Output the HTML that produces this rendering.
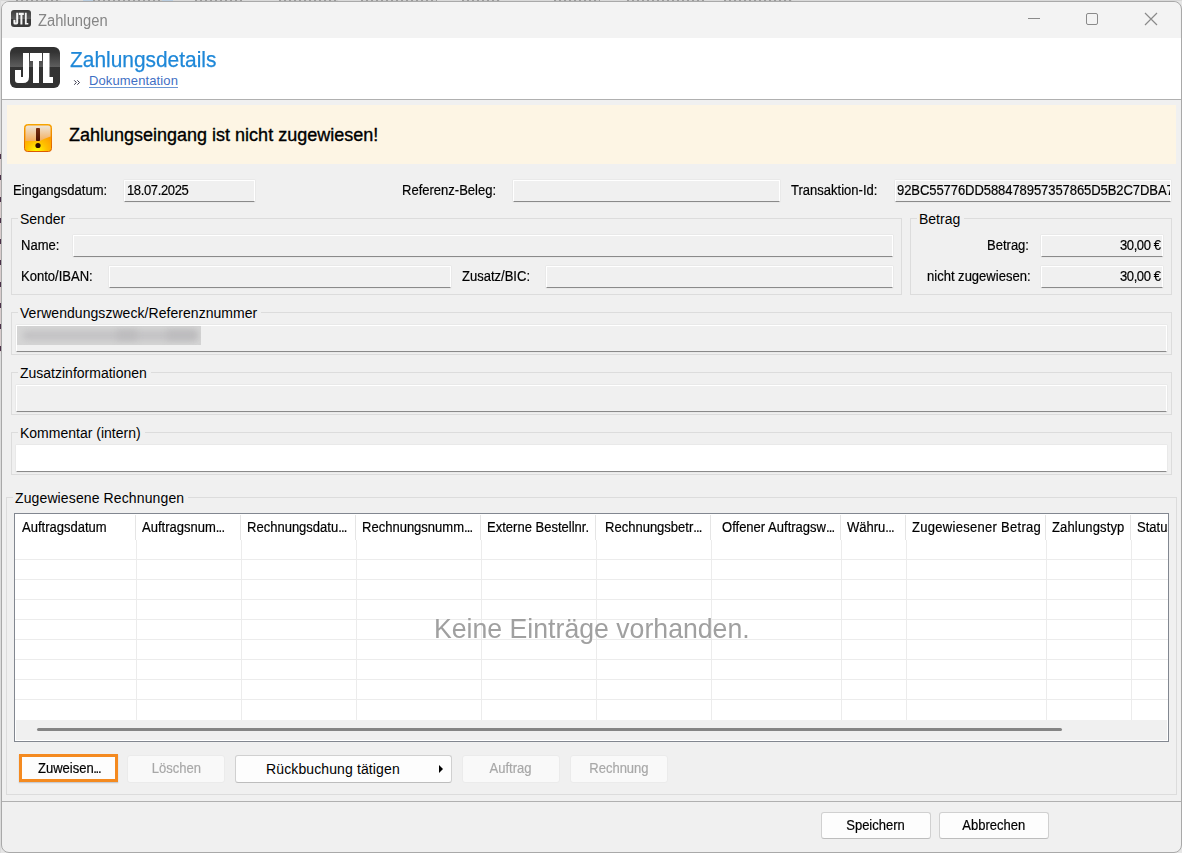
<!DOCTYPE html>
<html><head><meta charset="utf-8">
<style>
html,body{margin:0;padding:0;}
body{width:1182px;height:853px;overflow:hidden;position:relative;background:#e6e6e6;font-family:"Liberation Sans",sans-serif;color:#000;}
.a{position:absolute;}
.t{position:absolute;white-space:nowrap;line-height:13px;font-size:13px;}
.win{position:absolute;left:1px;top:1px;width:1179px;height:850px;border:1px solid #a9a9a9;border-radius:8px;background:#f0f0f0;overflow:hidden;}
.gb{position:absolute;box-sizing:border-box;border:1px solid #dcdcdc;}
.gbt{position:absolute;white-space:nowrap;line-height:14px;font-size:14px;background:#f0f0f0;padding:0 4px 0 2px;}
.tb{position:absolute;box-sizing:border-box;border:1px solid #fff;border-bottom:1px solid #8a8a8a;border-radius:1px;background:#f0f0f0;box-shadow:0 0 0 1px #e9e9e9;overflow:hidden;}
.btn{position:absolute;box-sizing:border-box;border:1px solid #d0d0d0;border-bottom-color:#bdbdbd;border-radius:3px;background:#fdfdfd;font-size:13px;line-height:13px;text-align:center;white-space:nowrap;}
.dis{border-color:#ebebeb;background:#f9f9f9;color:#a8a8a8;}
.gl{position:absolute;background:#ececec;}
.s{font-size:14px;line-height:14px;transform:scaleX(0.93);transform-origin:0 0;-webkit-text-stroke:0.2px currentColor;}
.bt{display:inline-block;font-size:14px;line-height:14px;transform:scaleX(0.93);-webkit-text-stroke:0.2px currentColor;}
</style></head>
<body>
<div class="a" style="left:0;top:0;width:1182px;height:1px;background:#d9d9d9;"></div>
<div class="a" style="left:83px;top:0;width:90px;height:1px;background:#b9cde0;"></div>
<div class="a" style="left:16px;top:0;width:45px;height:1px;background:repeating-linear-gradient(90deg,#9a9a9a 0 2px,#cdcdcd 2px 5px);"></div>
<div class="a" style="left:93px;top:0;width:69px;height:1px;background:repeating-linear-gradient(90deg,#9a9a9a 0 2px,#cdcdcd 2px 5px);"></div>
<div class="a" style="left:195px;top:0;width:47px;height:1px;background:repeating-linear-gradient(90deg,#9a9a9a 0 2px,#cdcdcd 2px 5px);"></div>
<div class="a" style="left:279px;top:0;width:59px;height:1px;background:repeating-linear-gradient(90deg,#9a9a9a 0 2px,#cdcdcd 2px 5px);"></div>
<div class="a" style="left:361px;top:0;width:76px;height:1px;background:repeating-linear-gradient(90deg,#9a9a9a 0 2px,#cdcdcd 2px 5px);"></div>
<div class="a" style="left:462px;top:0;width:38px;height:1px;background:repeating-linear-gradient(90deg,#9a9a9a 0 2px,#cdcdcd 2px 5px);"></div>
<div class="a" style="left:554px;top:0;width:46px;height:1px;background:repeating-linear-gradient(90deg,#9a9a9a 0 2px,#cdcdcd 2px 5px);"></div>
<div class="a" style="left:627px;top:0;width:77px;height:1px;background:repeating-linear-gradient(90deg,#9a9a9a 0 2px,#cdcdcd 2px 5px);"></div>
<div class="a" style="left:724px;top:0;width:68px;height:1px;background:repeating-linear-gradient(90deg,#9a9a9a 0 2px,#cdcdcd 2px 5px);"></div>
<div class="a" style="left:0;top:0;width:1px;height:853px;background:#dcdcdc;"></div>
<div class="a" style="left:0;top:152px;width:1px;height:200px;background:repeating-linear-gradient(180deg,#d8cccc 0 2px,#4a3048 2px 7px,#d8cccc 7px 21.3px);"></div>
<div class="win"></div>
<!-- title bar -->
<div class="a" style="left:2px;top:2px;width:1178px;height:36px;background:#f3f3f3;border-radius:7px 7px 0 0;"></div>
<svg width="0" height="0" style="position:absolute"><defs>
<linearGradient id="lg" x1="0" y1="0" x2="0" y2="1">
<stop offset="0" stop-color="#303030"/><stop offset="0.12" stop-color="#333"/><stop offset="0.49" stop-color="#5e5e5e"/><stop offset="0.5" stop-color="#323232"/><stop offset="1" stop-color="#333"/>
</linearGradient>
<g id="jtl">
<rect x="0" y="0" width="50" height="41" rx="6" fill="url(#lg)"/>
<path fill="#fff" d="M13 6H19V30Q19 36 13 36H8Q5 36 5 33V23H11V30H13Z"/>
<path fill="#fff" d="M20 6H32V14H29V36H23V14H20Z"/>
<path fill="#fff" d="M33 6H39.5V30H43V36H33Z"/>
</g>
<linearGradient id="wt" x1="0" y1="0" x2="0" y2="1"><stop offset="0" stop-color="#ede6da"/><stop offset="1" stop-color="#f4ae5c"/></linearGradient>
<radialGradient id="wb" cx="0.45" cy="1" r="0.7"><stop offset="0" stop-color="#ffff00"/><stop offset="0.55" stop-color="#ffbf00"/><stop offset="1" stop-color="#ff9c00"/></radialGradient>
<linearGradient id="ws" x1="0" y1="0" x2="0" y2="1"><stop offset="0" stop-color="#f5a500"/><stop offset="1" stop-color="#dc5a00"/></linearGradient>
<linearGradient id="we" x1="0" y1="0" x2="0" y2="1"><stop offset="0" stop-color="#7a3010"/><stop offset="1" stop-color="#4a1200"/></linearGradient>
</defs></svg><svg class="a" style="left:11px;top:10px" width="20" height="17" viewBox="0 0 20 17">
<defs><linearGradient id="sg" x1="0" y1="0" x2="0" y2="1"><stop offset="0" stop-color="#3a3a3a"/><stop offset="0.5" stop-color="#5c5c5c"/><stop offset="0.52" stop-color="#383838"/><stop offset="1" stop-color="#3a3a3a"/></linearGradient></defs>
<rect x="0" y="0" width="20" height="17" rx="3" fill="url(#sg)"/>
<path fill="#f4f4f4" d="M5.2 2.8H7.2V12.8Q7.2 14.6 5.4 14.6H4Q2.4 14.6 2.4 13V9.8H4.5V12.6H5.2Z"/>
<path fill="#f4f4f4" d="M7.8 2.8H12.8V5H11.4V14.6H9.4V5H7.8Z"/>
<path fill="#f4f4f4" d="M13.9 2.8H15.7V12.9H17.3V14.6H13.9Z"/>
</svg>
<div class="t" style="left:38px;top:13px;font-size:16px;line-height:16px;color:#858585;transform:scaleX(0.92);transform-origin:0 0;">Zahlungen</div>
<!-- window controls -->
<div class="a" style="left:1028px;top:18px;width:12px;height:1px;background:#8a8a8a;"></div>
<div class="a" style="left:1086px;top:13px;width:10px;height:10px;border:1px solid #8a8a8a;border-radius:2px;"></div>
<svg class="a" style="left:1144px;top:12px" width="14" height="14" viewBox="0 0 14 14"><path d="M1 1L13 13M13 1L1 13" stroke="#8a8a8a" stroke-width="1.2"/></svg>
<!-- header -->
<div class="a" style="left:2px;top:38px;width:1179px;height:61px;background:#fff;"></div>
<div class="a" style="left:2px;top:99px;width:1179px;height:1px;background:#b0b0b0;"></div>
<svg class="a" style="left:10px;top:47px" width="50" height="41" viewBox="0 0 50 41"><use href="#jtl"/></svg>
<div class="t" style="left:70px;top:49px;font-size:22px;line-height:22px;color:#1f88d8;transform:scaleX(0.95);transform-origin:0 0;-webkit-text-stroke:0.25px #1f88d8;">Zahlungsdetails</div>
<svg class="a" style="left:73px;top:79px" width="8" height="7" viewBox="0 0 8 7"><path d="M1.2 1.3L3.4 3.5L1.2 5.7M4.3 1.3L6.5 3.5L4.3 5.7" fill="none" stroke="#2a2a40" stroke-width="0.95"/></svg>
<div class="t" style="left:89px;top:74px;color:#3f6fc4;letter-spacing:0.12px;">Dokumentation</div><div class="a" style="left:89px;top:87px;width:89px;height:1px;background:#6b97d4;"></div>
<!-- warning -->
<div class="a" style="left:7px;top:105px;width:1169px;height:59px;background:#fdf5e4;"></div>
<svg class="a" style="left:24px;top:124px" width="28" height="28" viewBox="0 0 28 28">
<rect x="0.5" y="0.5" width="27" height="27" rx="3" fill="url(#wb)" stroke="url(#ws)"/>
<path d="M1.5 4Q1.5 1.5 4 1.5H24Q26.5 1.5 26.5 4V12.5L20 15L16 17H1.5Z" fill="url(#wt)"/>
<rect x="12" y="4" width="4" height="13" rx="0.8" fill="url(#we)"/>
<circle cx="14" cy="21.5" r="2.6" fill="#2a0c00"/>
</svg>
<div class="t" style="left:69px;top:126px;font-size:18px;line-height:18px;-webkit-text-stroke:0.35px #000;">Zahlungseingang ist nicht zugewiesen!</div>

<!-- row 1 -->
<div class="t s" style="left:13px;top:183px;">Eingangsdatum:</div>
<div class="tb" style="left:124px;top:180px;width:131px;height:22px;"></div>
<div class="t s" style="left:127px;top:183px;letter-spacing:-0.4px;">18.07.2025</div>
<div class="t s" style="left:402px;top:183px;">Referenz-Beleg:</div>
<div class="tb" style="left:513px;top:180px;width:267px;height:22px;"></div>
<div class="t s" style="left:791px;top:183px;">Transaktion-Id:</div>
<div class="tb" style="left:895px;top:180px;width:276px;height:22px;"><div class="t s" style="left:1px;top:2px;letter-spacing:-0.08px;">92BC55776DD588478957357865D5B2C7DBA7</div></div>
<!-- Sender -->
<div class="gb" style="left:11px;top:218px;width:891px;height:77px;"></div>
<div class="gbt" style="left:18px;top:212px;">Sender</div>
<div class="t s" style="left:21px;top:238px;">Name:</div>
<div class="tb" style="left:73px;top:235px;width:820px;height:22px;"></div>
<div class="t s" style="left:21px;top:269px;">Konto/IBAN:</div>
<div class="tb" style="left:109px;top:266px;width:342px;height:22px;"></div>
<div class="t s" style="left:462px;top:269px;">Zusatz/BIC:</div>
<div class="tb" style="left:546px;top:266px;width:347px;height:22px;"></div>
<!-- Betrag -->
<div class="gb" style="left:910px;top:218px;width:262px;height:77px;"></div>
<div class="gbt" style="left:917px;top:212px;">Betrag</div>
<div class="t s" style="left:987px;top:238px;">Betrag:</div>
<div class="tb" style="left:1041px;top:235px;width:122px;height:22px;"></div>
<div class="t s" style="left:1120px;top:238px;letter-spacing:-0.45px;">30,00 &euro;</div>
<div class="t s" style="left:927px;top:269px;">nicht zugewiesen:</div>
<div class="tb" style="left:1041px;top:266px;width:122px;height:22px;"></div>
<div class="t s" style="left:1120px;top:269px;letter-spacing:-0.45px;">30,00 &euro;</div>
<!-- Verwendungszweck -->
<div class="gb" style="left:11px;top:312px;width:1161px;height:43px;"></div>
<div class="gbt" style="left:18px;top:306px;letter-spacing:0.05px;">Verwendungszweck/Referenznummer</div>
<div class="tb" style="left:16px;top:325px;width:1151px;height:27px;"></div>
<div class="a" style="left:17px;top:326px;width:184px;height:19px;background:#d5d5d5;overflow:hidden;"><div class="a" style="left:6px;top:5px;width:174px;height:9px;background:#c2c1c3;filter:blur(3px);border-radius:4px;"></div><div class="a" style="left:100px;top:4px;width:20px;height:10px;background:#bdbcbe;filter:blur(3px);"></div><div class="a" style="left:150px;top:4px;width:30px;height:10px;background:#bdbcbe;filter:blur(3px);"></div></div>
<!-- Zusatzinformationen -->
<div class="gb" style="left:11px;top:372px;width:1161px;height:43px;"></div>
<div class="gbt" style="left:18px;top:366px;">Zusatzinformationen</div>
<div class="tb" style="left:16px;top:385px;width:1151px;height:27px;"></div>
<!-- Kommentar -->
<div class="gb" style="left:11px;top:432px;width:1161px;height:43px;"></div>
<div class="gbt" style="left:18px;top:426px;">Kommentar (intern)</div>
<div class="tb" style="left:16px;top:445px;width:1151px;height:27px;background:#fff;"></div>
<!-- Zugewiesene Rechnungen -->
<div class="gb" style="left:6px;top:497px;width:1171px;height:298px;"></div>
<div class="gbt" style="left:13px;top:491px;letter-spacing:0.12px;">Zugewiesene Rechnungen</div>
<div class="a" style="left:14px;top:513px;width:1155px;height:229px;box-sizing:border-box;border:1px solid #828790;background:#fff;overflow:hidden;">
<div class="a" style="left:1px;top:206px;width:1151px;height:20px;background:#f0f0f0;"></div>
<div class="a" style="left:22px;top:214px;width:1025px;height:3px;background:#858585;border-radius:2px;"></div>
<div class="gl" style="left:0;top:45px;width:1153px;height:1px;"></div>
<div class="gl" style="left:0;top:65px;width:1153px;height:1px;"></div>
<div class="gl" style="left:0;top:85px;width:1153px;height:1px;"></div>
<div class="gl" style="left:0;top:105px;width:1153px;height:1px;"></div>
<div class="gl" style="left:0;top:125px;width:1153px;height:1px;"></div>
<div class="gl" style="left:0;top:145px;width:1153px;height:1px;"></div>
<div class="gl" style="left:0;top:165px;width:1153px;height:1px;"></div>
<div class="gl" style="left:0;top:185px;width:1153px;height:1px;"></div>
<div class="gl" style="left:121px;top:26px;width:1px;height:180px;"></div>
<div class="a" style="left:120px;top:1px;width:1px;height:25px;background:#e5e5e5;"></div>
<div class="gl" style="left:226px;top:26px;width:1px;height:180px;"></div>
<div class="a" style="left:225px;top:1px;width:1px;height:25px;background:#e5e5e5;"></div>
<div class="gl" style="left:341px;top:26px;width:1px;height:180px;"></div>
<div class="a" style="left:340px;top:1px;width:1px;height:25px;background:#e5e5e5;"></div>
<div class="gl" style="left:466px;top:26px;width:1px;height:180px;"></div>
<div class="a" style="left:465px;top:1px;width:1px;height:25px;background:#e5e5e5;"></div>
<div class="gl" style="left:581px;top:26px;width:1px;height:180px;"></div>
<div class="a" style="left:580px;top:1px;width:1px;height:25px;background:#e5e5e5;"></div>
<div class="gl" style="left:696px;top:26px;width:1px;height:180px;"></div>
<div class="a" style="left:695px;top:1px;width:1px;height:25px;background:#e5e5e5;"></div>
<div class="gl" style="left:826px;top:26px;width:1px;height:180px;"></div>
<div class="a" style="left:825px;top:1px;width:1px;height:25px;background:#e5e5e5;"></div>
<div class="gl" style="left:891px;top:26px;width:1px;height:180px;"></div>
<div class="a" style="left:890px;top:1px;width:1px;height:25px;background:#e5e5e5;"></div>
<div class="gl" style="left:1031px;top:26px;width:1px;height:180px;"></div>
<div class="a" style="left:1030px;top:1px;width:1px;height:25px;background:#e5e5e5;"></div>
<div class="gl" style="left:1116px;top:26px;width:1px;height:180px;"></div>
<div class="a" style="left:1115px;top:1px;width:1px;height:25px;background:#e5e5e5;"></div>
<div class="t s" style="left:7px;top:6px;">Auftragsdatum</div>
<div class="t s" style="left:127px;top:6px;">Auftragsnum<span style="letter-spacing:-0.9px">...</span></div>
<div class="t s" style="left:232px;top:6px;">Rechnungsdatu<span style="letter-spacing:-0.9px">...</span></div>
<div class="t s" style="left:347px;top:6px;">Rechnungsnumm<span style="letter-spacing:-0.9px">...</span></div>
<div class="t s" style="left:472px;top:6px;">Externe Bestellnr.</div>
<div class="t s" style="left:590px;top:6px;">Rechnungsbetr<span style="letter-spacing:-0.9px">...</span></div>
<div class="t s" style="left:707px;top:6px;">Offener Auftragsw<span style="letter-spacing:-0.9px">...</span></div>
<div class="t s" style="left:832px;top:6px;">Währu<span style="letter-spacing:-0.9px">...</span></div>
<div class="t s" style="left:897px;top:6px;"><span style="letter-spacing:0.3px">Zugewiesener Betrag</span></div>
<div class="t s" style="left:1037px;top:6px;letter-spacing:0.15px;">Zahlungstyp</div>
<div class="t s" style="left:1122px;top:6px;">Status</div>
<div class="t" style="left:419px;top:100.5px;font-size:28px;line-height:28px;color:#a0a0a0;transform:scaleX(0.952);transform-origin:0 0;">Keine Einträge vorhanden.</div>
</div>

<!-- buttons -->
<div class="btn" style="left:19px;top:754px;width:99px;height:28px;border:3px solid #f48a20;border-radius:0;background:#fdfdfd;padding-top:5px;box-shadow:0 1px 1px rgba(80,90,110,0.25);"><span class="t s" style="left:16px;top:4px;">Zuweisen<span style="letter-spacing:-1.4px;margin-left:-0.5px">...</span></span></div>
<div class="btn dis" style="left:127px;top:755px;width:98px;height:28px;padding-top:5px;"><span class="bt">Löschen</span></div>
<div class="btn" style="left:235px;top:755px;width:217px;height:28px;font-size:14px;line-height:14px;text-align:left;"><span class="t" style="left:30px;top:6px;font-size:14px;line-height:14px;letter-spacing:0.12px;">Rückbuchung tätigen</span></div>
<svg class="a" style="left:439px;top:765px" width="4" height="8"><path d="M0 0L4 4L0 8Z" fill="#000"/></svg>
<div class="btn dis" style="left:462px;top:755px;width:98px;height:28px;padding-top:5px;"><span class="bt">Auftrag</span></div>
<div class="btn dis" style="left:570px;top:755px;width:98px;height:28px;padding-top:5px;"><span class="bt">Rechnung</span></div>
<!-- footer -->
<div class="a" style="left:2px;top:801px;width:1179px;height:1px;background:#b0b0b0;"></div>
<div class="btn" style="left:821px;top:812px;width:110px;height:27px;padding-top:5px;"><span class="bt">Speichern</span></div>
<div class="btn" style="left:939px;top:812px;width:110px;height:27px;padding-top:5px;"><span class="bt">Abbrechen</span></div>
</body></html>
